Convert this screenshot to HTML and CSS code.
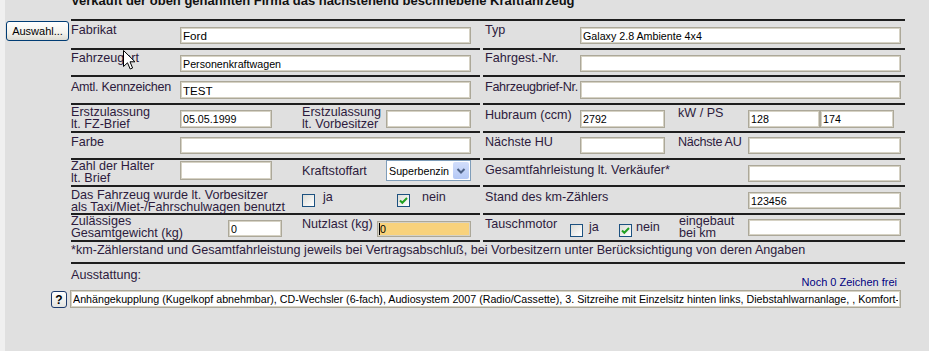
FILE: index.html
```html
<!DOCTYPE html>
<html>
<head>
  <title>Fahrzeugdaten</title>
  <link rel="stylesheet" href="styles.css">
</head>
<body>

  <div class="form">
    <div class="title">Verkauft der oben genannten Firma das nachstehend beschriebene Kraftfahrzeug</div>

    <div class="side side-top"><button class="btn" type="button">Auswahl...</button></div>

    <div class="row r1">
      <div class="half left">
        <span class="lbl w109">Fabrikat</span>
        <input class="inp w291 big" type="text" value="Ford">
      </div>
      <div class="half right">
        <span class="lbl w95">Typ</span>
        <input class="inp w321" type="text" value="Galaxy 2.8 Ambiente 4x4">
      </div>
    </div>

    <div class="row r2">
      <div class="half left">
        <span class="lbl w109 pt1">Fahrzeugart</span>
        <input class="inp w291" type="text" value="Personenkraftwagen">
      </div>
      <div class="half right">
        <span class="lbl w95 pt1">Fahrgest.-Nr.</span>
        <input class="inp w321" type="text" value="">
      </div>
    </div>

    <div class="row r3">
      <div class="half left">
        <span class="lbl w109 narrow">Amtl. Kennzeichen</span>
        <input class="inp w291 big" type="text" value="TEST">
      </div>
      <div class="half right">
        <span class="lbl w95 narrow">Fahrzeugbrief-Nr.</span>
        <input class="inp w321" type="text" value="">
      </div>
    </div>

    <div class="row r4">
      <div class="half left">
        <span class="lbl two w109">Erstzulassung<br>lt. FZ-Brief</span>
        <input class="inp w92" type="text" value="05.05.1999">
        <span class="lbl two w84 ml30">Erstzulassung<br>lt. Vorbesitzer</span>
        <input class="inp w85" type="text" value="">
      </div>
      <div class="half right">
        <span class="lbl w95 pt3">Hubraum (ccm)</span>
        <input class="inp w85" type="text" value="2792">
        <span class="lbl w70 ml13 pt1">kW / PS</span>
        <input class="inp w72" type="text" value="128">
        <input class="inp w74 ml7" type="text" value="174">
      </div>
    </div>

    <div class="row r5">
      <div class="half left">
        <span class="lbl w109">Farbe</span>
        <input class="inp w291" type="text" value="">
      </div>
      <div class="half right">
        <span class="lbl w95">Nächste HU</span>
        <input class="inp w85" type="text" value="">
        <span class="lbl w70 ml13 narrow">Nächste AU</span>
        <input class="inp w153" type="text" value="">
      </div>
    </div>

    <div class="row r6">
      <div class="half left">
        <span class="lbl two w109 pt0">Zahl der Halter<br>lt. Brief</span>
        <input class="inp w92 tall" type="text" value="">
        <span class="lbl w84 ml30 pt4">Kraftstoffart</span>
        <div class="sel">
          <span class="sel-text">Superbenzin</span>
          <span class="drop">
            <svg width="14" height="14" viewBox="0 0 14 14"><path d="M3.5 5 L7 8.5 L10.5 5" fill="none" stroke="#4d6185" stroke-width="2"/></svg>
          </span>
        </div>
      </div>
      <div class="half right">
        <span class="lbl w263 pt3">Gesamtfahrleistung lt. Verkäufer*</span>
        <input class="inp w153" type="text" value="">
      </div>
    </div>

    <div class="row r7">
      <div class="half left">
        <span class="lbl two w231 pt2">Das Fahrzeug wurde lt. Vorbesitzer<br>als Taxi/Miet-/Fahrschulwagen benutzt</span>
        <span class="opt w95">
          <span class="cb"></span>
          <span class="opt-text ml8">ja</span>
        </span>
        <span class="opt">
          <span class="cb"><svg width="11" height="11" viewBox="0 0 11 11"><path d="M2 5.5 L4.3 7.8 L9 3" fill="none" stroke="#21a121" stroke-width="2"/></svg></span>
          <span class="opt-text ml12">nein</span>
        </span>
      </div>
      <div class="half right">
        <span class="lbl w263">Stand des km-Zählers</span>
        <input class="inp w153" type="text" value="123456">
      </div>
    </div>

    <div class="row r8">
      <div class="half left">
        <span class="lbl two w157 pt0">Zulässiges<br>Gesamtgewicht (kg)</span>
        <input class="inp w54" type="text" value="0">
        <span class="lbl w75 ml20">Nutzlast (kg)</span>
        <span class="focus"><input class="inp w94 hl" type="text" value="0"></span>
      </div>
      <div class="half right">
        <span class="lbl w85">Tauschmotor</span>
        <span class="opt w49">
          <span class="cb"></span>
          <span class="opt-text ml6">ja</span>
        </span>
        <span class="opt w60">
          <span class="cb"><svg width="11" height="11" viewBox="0 0 11 11"><path d="M2 5.5 L4.3 7.8 L9 3" fill="none" stroke="#21a121" stroke-width="2"/></svg></span>
          <span class="opt-text ml4">nein</span>
        </span>
        <span class="lbl two w69 pt0">eingebaut<br>bei km</span>
        <input class="inp w153" type="text" value="">
      </div>
    </div>

    <div class="note">*km-Zählerstand und Gesamtfahrleistung jeweils bei Vertragsabschluß, bei Vorbesitzern unter Berücksichtigung von deren Angaben</div>

    <div class="equip-head">
      <span class="lbl">Ausstattung:</span>
      <span class="counter">Noch 0 Zeichen frei</span>
    </div>

    <div class="side side-help"><button class="help" type="button">?</button></div>
    <div class="equip">
      <input class="inp equip-inp" type="text" value="Anhängekupplung (Kugelkopf abnehmbar), CD-Wechsler (6-fach), Audiosystem 2007 (Radio/Cassette), 3. Sitzreihe mit Einzelsitz hinten links, Diebstahlwarnanlage, , Komfort-Paket, Klimaanlage">
    </div>
  </div>

  <svg class="pointer" width="13" height="21" viewBox="0 0 13 21">
    <path d="M0.5 0.5 L0.5 16.5 L4.5 12.8 L7.2 19 L9.6 18 L7 11.8 L12 11.8 Z" fill="#fff" stroke="#000" stroke-width="1"/>
  </svg>

</body>
</html>
```

FILE: styles.css
```css
body {
  margin: 0;
  height: 351px;
  overflow: hidden;
  position: relative;
  font-family: "Liberation Sans", Arial, sans-serif;
  font-size: 12.6px;
  color: #2d1b3d;
  background: linear-gradient(to right, #f0f0f0 5px, #e0e0e0 5px);
}

.form {
  display: grid;
  grid-template-columns: 71px 834px;
  margin-top: -7px;
}

.title,
.row,
.note,
.equip-head,
.equip {
  grid-column: 2;
}

.side {
  grid-column: 1;
}

.side-top {
  grid-row: 2;
  padding-left: 6px;
}

.side-help {
  grid-row: 12;
  display: flex;
  justify-content: flex-end;
  padding-right: 4px;
}

.title {
  font-weight: bold;
  font-size: 13px;
  line-height: 16px;
  padding-bottom: 10px;
  border-bottom: 2px solid #1e1e1e;
  color: #111;
}

.row {
  display: flex;
  gap: 3px;
}

.half {
  display: flex;
  align-items: flex-start;
  height: 25px;
  border-bottom: 2px solid #1e1e1e;
}

.left {
  width: 409px;
}

.right {
  width: 420px;
  padding-left: 2px;
}

.r1 .half { height: 27px; }
.r3 .half,
.r4 .half,
.r7 .half { height: 26px; }

.lbl {
  line-height: 15px;
  padding-top: 2px;
  white-space: nowrap;
  flex-shrink: 0;
}

.lbl.two {
  line-height: 12px;
  padding-top: 1px;
}

.lbl.narrow {
  letter-spacing: -0.3px;
}

.r3 .lbl { padding-top: 3px; }
.r7 .lbl { padding-top: 3px; }

.pt0 { padding-top: 0 !important; }
.pt1 { padding-top: 1px !important; }
.pt2 { padding-top: 2px !important; }
.pt3 { padding-top: 3px !important; }
.pt4 { padding-top: 4px !important; }

.ml4 { margin-left: 4px; }
.ml6 { margin-left: 6px; }
.ml7 { margin-left: 7px; }
.ml8 { margin-left: 8px; }
.ml12 { margin-left: 12px; }
.ml13 { margin-left: 13px; }
.ml20 { margin-left: 20px; }
.ml30 { margin-left: 30px; }

.w49 { width: 49px; }
.w54 { width: 54px; }
.w60 { width: 60px; }
.w69 { width: 69px; }
.w70 { width: 70px; }
.w72 { width: 72px; }
.w74 { width: 74px; }
.w75 { width: 75px; }
.w84 { width: 84px; }
.w85 { width: 85px; }
.w92 { width: 92px; }
.w94 { width: 94px; }
.w95 { width: 95px; }
.w109 { width: 109px; }
.w153 { width: 153px; }
.w157 { width: 157px; }
.w231 { width: 231px; }
.w263 { width: 263px; }
.w291 { width: 291px; }
.w321 { width: 321px; }

.inp {
  box-sizing: border-box;
  height: 17px;
  margin: 5px 0 0 0;
  padding: 0 2px;
  border: 1px solid #aca899;
  box-shadow: inset 0 0 0 1px #d6d2c4;
  background: #fff;
  font-family: "Liberation Sans", Arial, sans-serif;
  font-size: 10.7px;
  color: #000;
  outline: none;
  flex-shrink: 0;
}

.inp.big {
  font-size: 11.6px;
}

.r1 .inp { margin-top: 6px; }
.r3 .inp { margin-top: 4px; height: 18px; }
.r4 .inp { height: 18px; }
.r5 .inp { margin-top: 4px; }
.r8 .right .inp { margin-top: 4px; }

.inp.tall {
  margin-top: 1px;
  height: 19px;
}

.inp.hl {
  background: #f8d27c;
  margin-top: 6px;
  height: 16px;
}

.focus {
  position: relative;
  display: flex;
}

.focus::after {
  content: "";
  position: absolute;
  left: 2px;
  top: 8px;
  width: 1px;
  height: 12px;
  background: #000;
}

.sel {
  box-sizing: border-box;
  width: 85px;
  height: 21px;
  border: 1px solid #7f9db9;
  background: #fff;
  display: flex;
  align-items: center;
  font-size: 10.7px;
  color: #000;
  flex-shrink: 0;
}

.sel-text {
  padding-left: 2px;
}

.drop {
  margin: 1px 1px 1px auto;
  width: 16px;
  height: 17px;
  border-radius: 2px;
  background: linear-gradient(#d2defb, #b4c8f5);
  display: flex;
  align-items: center;
  justify-content: center;
}

.opt {
  display: flex;
  align-items: flex-start;
  flex-shrink: 0;
}

.cb {
  box-sizing: border-box;
  width: 13px;
  height: 13px;
  margin-top: 7px;
  border: 1px solid #1c5180;
  background: linear-gradient(135deg, #dcdcd7, #fff);
  display: flex;
  align-items: center;
  justify-content: center;
}

.r8 .cb { margin-top: 9px; }

.opt-text {
  line-height: 15px;
  padding-top: 3px;
}

.r8 .opt-text { padding-top: 5px; }

.note {
  height: 19px;
  padding-top: 1px;
  line-height: 15px;
  border-bottom: 2px solid #1e1e1e;
  white-space: nowrap;
}

.equip-head {
  display: flex;
  justify-content: space-between;
  height: 26px;
}

.equip-head .lbl {
  padding-top: 4px;
}

.counter {
  align-self: flex-end;
  font-size: 11px;
  line-height: 13px;
  margin: 0 8px 1px 0;
  color: #000080;
}

.equip-inp {
  width: 831px;
  height: 18px;
  margin: 0 0 0 -1px;
}

.btn {
  box-sizing: border-box;
  width: 63px;
  height: 20px;
  padding: 0;
  border: 1px solid #003c74;
  border-radius: 3px;
  background: linear-gradient(#ffffff, #f3f2ec 60%, #dddcd4);
  font-family: "Liberation Sans", Arial, sans-serif;
  font-size: 11px;
  color: #000;
}

.help {
  box-sizing: border-box;
  width: 16px;
  height: 17px;
  margin-top: 1px;
  padding: 0;
  border: 1px solid #1c3a6e;
  border-radius: 3px;
  background: linear-gradient(#ffffff, #e4e4e0);
  font-family: "Liberation Sans", Arial, sans-serif;
  font-weight: bold;
  font-size: 12px;
  line-height: 14px;
  color: #000;
}

.pointer {
  position: absolute;
  left: 123px;
  top: 50px;
}
```
